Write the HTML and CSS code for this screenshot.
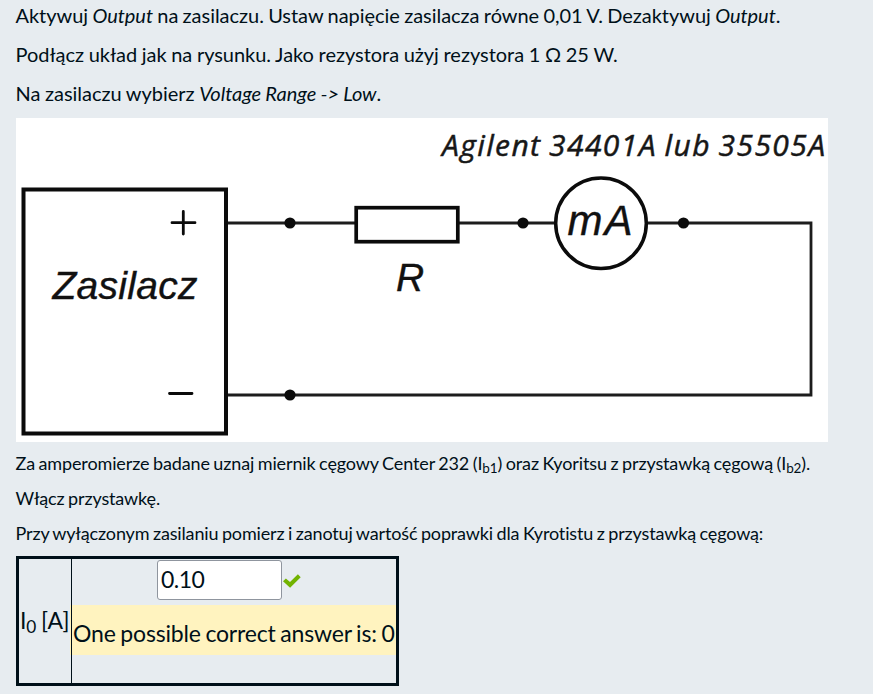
FILE: index.html
```html
<!DOCTYPE html>
<html lang="pl">
<head>
<meta charset="utf-8">
<title>Zasilacz</title>
<link rel="stylesheet" href="styles.css">
</head>
<body>
<main class="question">
  <section class="steps">
    <p class="l1">Aktywuj <em>Output</em> na zasilaczu. Ustaw napięcie zasilacza równe 0,01 V. Dezaktywuj <em>Output</em>.</p>
    <p>Podłącz układ jak na rysunku. Jako rezystora użyj rezystora 1 Ω 25 W.</p>
    <p>Na zasilaczu wybierz <em>Voltage Range -&gt; Low</em>.</p>
  </section>
  <svg class="circuit" viewBox="16 118 812 324" width="812" height="324">
    <g fill="none" stroke="#0b0b0b">
      <rect x="23.5" y="189.5" width="202.5" height="244" stroke-width="4"/>
      <path d="M228 223H355M459 223H555M648 223H811V395H228" stroke-width="2.8" stroke="#1c1c1c"/>
      <rect x="356.2" y="207.7" width="101.6" height="34" stroke-width="3.7"/>
      <circle cx="601" cy="223.2" r="45.3" stroke-width="3.5"/>
      <path d="M172 222.7H195M183.3 211.5V234M169.5 393.5H192" stroke-width="2.8" stroke-linecap="round"/>
    </g>
    <g fill="#0b0b0b">
      <circle cx="290" cy="223" r="5.6"/>
      <circle cx="523" cy="223" r="5.6"/>
      <circle cx="683.5" cy="223" r="5.6"/>
      <circle cx="290" cy="395" r="5.6"/>
    </g>
    <text class="caption" x="442" y="155.7" textLength="383">Agilent 34401A lub 35505A</text>
    <text class="label" x="52.5" y="298.5" textLength="145">Zasilacz</text>
    <text class="label" x="396" y="290.5">R</text>
    <text class="label meter" x="567.5" y="235" textLength="65">mA</text>
  </svg>
  <section class="notes">
    <p class="n1">Za amperomierze badane uznaj miernik cęgowy Center 232 (I<sub>b1</sub>) oraz Kyoritsu z przystawką cęgową (I<sub>b2</sub>).</p>
    <p>Włącz przystawkę.</p>
    <p>Przy wyłączonym zasilaniu pomierz i zanotuj wartość poprawki dla Kyrotistu z przystawką cęgową:</p>
  </section>
  <div class="answer">
    <div class="name">I<sub>0</sub> [A]</div>
    <div class="value">
      <div class="entry">
        <input type="text" value="0.10">
        <svg class="tick" viewBox="0 0 18 14" width="18" height="14"><path d="M0 7.3L2.9 4.4 7 8.1 14.9 .3 17.7 3.2 7.1 13.7Z" fill="#72b300"/></svg>
      </div>
      <div class="feedback">One possible correct answer is: 0</div>
    </div>
  </div>
</main>
</body>
</html>
```
FILE: styles.css
```css
body {
  margin: 0;
  background: #e7ecf0;
  color: #001019;
  font-family: Lato, sans-serif;
  overflow: hidden;
}
.question { padding: 0 16px; }
p { margin: 0 0 0 -.5px; white-space: nowrap; }
.steps { height: 118px; }
.steps p {
  height: 39px;
  line-height: 31px;
  font-size: 20px;
  letter-spacing: -.03px;
  word-spacing: -.45px;
}
.steps .l1 { word-spacing: -.8px; }
.circuit { display: block; background: #fff; }
.caption {
  font: italic 30px "Open Sans", sans-serif;
  word-spacing: -1.5px;
  fill: #171717;
  stroke: #171717;
  stroke-width: .5px;
}
.label { font: italic 39px "Liberation Sans", sans-serif; fill: #111; stroke: #111; stroke-width: .4px; }
.meter { font-size: 42px; }
.notes { height: 114px; padding-top: 5px; box-sizing: border-box; }
.notes p {
  height: 35px;
  line-height: 33px;
  font-size: 18px;
  letter-spacing: -.15px;
  word-spacing: -.9px;
}
.notes .n1 { letter-spacing: -.13px; }
sub { font-size: 75%; line-height: 0; position: relative; vertical-align: baseline; bottom: -.25em; }
.answer {
  display: flex;
  box-sizing: border-box;
  width: 383px;
  height: 130px;
  border: 3px solid #001019;
  font-size: 23px;
  letter-spacing: -.18px;
  word-spacing: -1px;
  white-space: nowrap;
}
.name {
  position: relative;
  z-index: 1;
  box-sizing: border-box;
  width: 53px;
  border-right: 1px solid #001019;
  padding: 41px 0 0 1px;
  line-height: 40px;
  letter-spacing: -.1px;
}
.value { width: 324px; }
.entry { display: flex; align-items: center; height: 46px; padding-left: 85px; }
input {
  box-sizing: border-box;
  width: 125px;
  height: 40px;
  margin: 0 0 4px;
  padding: 0 3px 2px;
  border: 1px solid #8f959e;
  border-radius: 3px;
  background: #fff;
  color: #001019;
  font: 23px Lato, sans-serif;
  letter-spacing: -.5px;
}
.tick { margin: 0 0 3px 1px; }
.feedback {
  height: 50px;
  margin-left: -2px;
  padding-left: 3px;
  background: #fff3bf;
  line-height: 57px;
}
```
